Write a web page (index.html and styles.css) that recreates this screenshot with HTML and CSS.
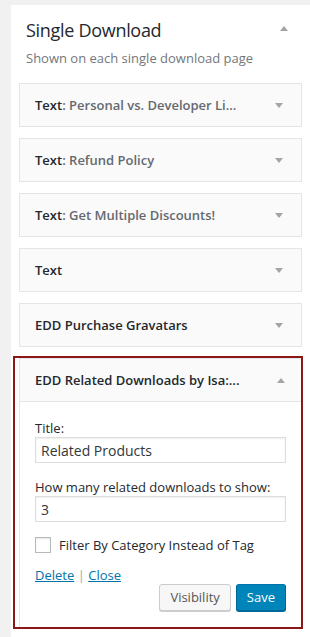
FILE: index.html
```html
<!DOCTYPE html>
<html lang="en">
<head>
  <meta charset="UTF-8">
  <title>Single Download</title>
  <link rel="stylesheet" href="styles.css">
</head>
<body>

<!-- Sidebar section -->
<div class="panel">
  <div class="panel-head">
    <h2>Single Download</h2>
    <span class="caret up"></span>
  </div>
  <p class="desc">Shown on each single download page</p>

  <!-- Widgets -->
  <div class="widget">
    <div class="widget-top">
      <h3>Text<span class="in-title">: Personal vs. Developer Li...</span></h3>
      <span class="caret"></span>
    </div>
  </div>

  <div class="widget">
    <div class="widget-top">
      <h3>Text<span class="in-title">: Refund Policy</span></h3>
      <span class="caret"></span>
    </div>
  </div>

  <div class="widget">
    <div class="widget-top">
      <h3>Text<span class="in-title">: Get Multiple Discounts!</span></h3>
      <span class="caret"></span>
    </div>
  </div>

  <div class="widget">
    <div class="widget-top">
      <h3>Text</h3>
      <span class="caret"></span>
    </div>
  </div>

  <div class="widget">
    <div class="widget-top">
      <h3>EDD Purchase Gravatars</h3>
      <span class="caret"></span>
    </div>
  </div>

  <!-- Open widget -->
  <div class="active-wrap">
    <div class="widget open">
      <div class="widget-top">
        <h3>EDD Related Downloads by Isa:...</h3>
        <span class="caret up"></span>
      </div>
      <div class="widget-inside">
        <label class="field">Title:
          <input type="text" value="Related Products">
        </label>
        <label class="field">How many related downloads to show:
          <input type="text" value="3">
        </label>
        <label class="check">
          <span class="box"></span>
          Filter By Category Instead of Tag
        </label>
        <div class="links">
          <a href="#">Delete</a> <span class="sep">|</span> <a href="#">Close</a>
        </div>
        <div class="actions">
          <button class="btn">Visibility</button>
          <button class="btn primary">Save</button>
        </div>
      </div>
    </div>
  </div>
</div>

</body>
</html>
```

FILE: styles.css
```css
body {
  margin: 0;
  background-color: #f1f1f1;
  font-family: "Open Sans", "Liberation Sans", sans-serif;
  color: #23282d;
  overflow: hidden;
}

.panel {
  background: #fff;
  margin: 5px 0 0 11px;
  width: 310px;
  padding: 0 0 20px 8px;
  min-height: 640px;
  box-sizing: border-box;
}

.panel-head {
  display: flex;
  align-items: center;
  width: 283px;
  padding: 13px 0 0 7px;
  box-sizing: border-box;
}

.panel-head h2 {
  flex: 1;
  margin: 0;
  font-size: 18px;
  font-weight: 400;
  line-height: 24px;
  letter-spacing: -0.3px;
}

.panel-head .caret {
  margin-right: 14px;
  margin-bottom: 3px;
}

.desc {
  margin: 7px 0 0 7px;
  font-size: 13px;
  line-height: 18px;
  color: #72777c;
}

.caret {
  width: 0;
  height: 0;
  border-left: 4px solid transparent;
  border-right: 4px solid transparent;
  border-top: 5px solid #a0a5aa;
}

.caret.up {
  border-top: none;
  border-bottom: 5px solid #a0a5aa;
}

.widget {
  width: 283px;
  box-sizing: border-box;
  border: 1px solid #e5e5e5;
  background: #fafafa;
  margin-top: 11px;
}

.desc + .widget {
  margin-top: 16px;
}

.widget-top {
  display: flex;
  align-items: center;
  height: 42px;
  padding: 0 18px 0 15px;
}

.widget-top h3 {
  flex: 1;
  margin: 0;
  font-size: 13px;
  font-weight: 600;
  color: #23282d;
  white-space: nowrap;
}

.in-title {
  color: #646970;
}

.active-wrap {
  border: 2px solid #8c1717;
  width: 290px;
  margin: 9px 0 0 -6px;
  padding: 0 0 0 4px;
  box-sizing: border-box;
}

.widget.open {
  margin: 0;
  width: auto;
  background: #fff;
  border-right: none;
  border-bottom: none;
}

.widget.open .widget-top {
  background: #fafafa;
  border-bottom: 1px solid #e5e5e5;
  padding-right: 16px;
}

.widget-inside {
  padding: 17px 15px 16px 15px;
  font-size: 13px;
}

.field {
  display: block;
  line-height: 18px;
  margin-bottom: 15px;
}

.field input {
  display: block;
  width: 251px;
  height: 26px;
  box-sizing: border-box;
  margin-top: 0;
  padding: 2px 5px;
  border: 1px solid #ddd;
  box-shadow: inset 0 1px 2px rgba(0, 0, 0, 0.07);
  font-family: "Open Sans", "Liberation Sans", sans-serif;
  font-size: 14px;
  color: #32373c;
}

.check {
  display: flex;
  align-items: center;
  gap: 8px;
  margin-top: 2px;
  line-height: 16px;
}

.box {
  width: 16px;
  height: 16px;
  box-sizing: border-box;
  border: 1px solid #b4b9be;
  background: #fff;
  box-shadow: inset 0 1px 2px rgba(0, 0, 0, 0.1);
}

.links {
  margin-top: 13px;
  line-height: 18px;
}

.links a {
  color: #0073aa;
}

.sep {
  color: #a0a5aa;
}

.actions {
  display: flex;
  justify-content: flex-end;
  gap: 5px;
}

.btn {
  height: 27px;
  padding: 0 10px;
  font-family: "Open Sans", "Liberation Sans", sans-serif;
  font-size: 13px;
  line-height: 25px;
  color: #555;
  background: #f7f7f7;
  border: 1px solid #ccc;
  border-radius: 3px;
  box-shadow: 0 1px 0 #ccc;
}

.btn.primary {
  color: #fff;
  background: #0085ba;
  border-color: #0073aa #006799 #006799;
  box-shadow: 0 1px 0 #006799;
}
```
